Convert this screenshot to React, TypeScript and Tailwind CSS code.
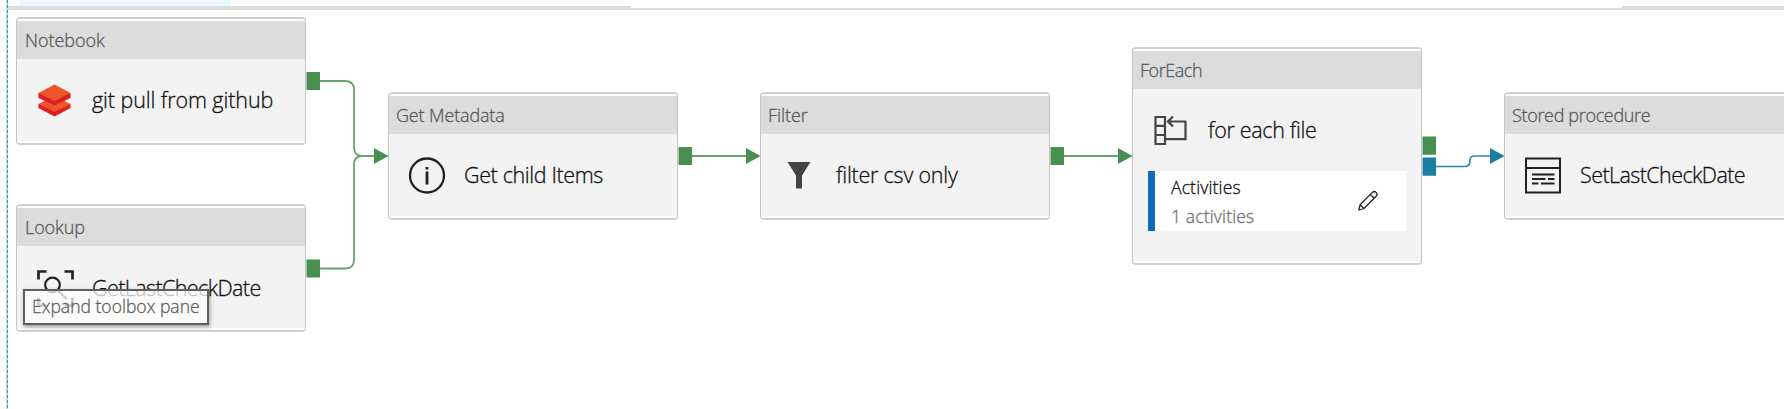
import React from "react";

type NodeProps = {
  type: string;
  typeClass: string;
  title: string;
  titleClass: string;
  className: string;
  icon: React.ReactNode;
  children?: React.ReactNode;
};

function ActivityNode({ type, typeClass, title, titleClass, className, icon, children }: NodeProps) {
  return (
    <div className={`absolute flex w-[290px] flex-col rounded-[4px] border-x border-y-2 border-x-[#c4c4c4] border-y-[#d0d0d0] bg-white py-[2px] ${className}`}>
      <div className="flex h-[38px] shrink-0 items-center bg-[#dcdcdc] pl-2 text-[18px] leading-none text-[#595959]">
        <span className={`whitespace-nowrap ${typeClass}`}>{type}</span>
      </div>
      <div className="flex flex-1 flex-col bg-[#f3f3f3]">
        <div className="flex h-[82px] shrink-0 items-center">
          <div className="flex w-[75px] shrink-0 pl-5">{icon}</div>
          <span className={`whitespace-nowrap text-[21.5px] leading-none text-[#111] ${titleClass}`}>{title}</span>
        </div>
        {children}
      </div>
    </div>
  );
}

const NotebookIcon = () => (
  <svg width="36" height="36" viewBox="0 0 36 36">
    <g transform="translate(-0.500 2)">
      <path d="M2 19.500v4.500l16 8.500 16-8.500v-4.500l-16 7z" fill="#dc1f26" />
      <path d="M2 20l16-8 16 8-16 8z" fill="#ef552b" />
      <path d="M2 9v5l16 7.500 16-7.500V9z" fill="#dc1f26" />
      <path d="M2 9L18 0.500 34 9l-16 8z" fill="#ef552b" />
    </g>
  </svg>
);

const LookupIcon = () => (
  <svg width="37" height="37" viewBox="0 0 37 37" fill="none" stroke="#222">
    <path d="M1.500 9.500V1.500h8M27.500 1.500h8v8M1.500 27.500v8h8M27.500 35.500h8v-8" strokeWidth="2.700" />
    <circle cx="15.500" cy="15" r="7.300" strokeWidth="2.200" />
    <path d="M20.700 20.500l9 8.500" strokeWidth="2.200" />
  </svg>
);

const InfoIcon = () => (
  <svg width="37" height="37" viewBox="0 0 37 37" fill="none" stroke="#222">
    <circle cx="18" cy="18.500" r="17" strokeWidth="2.300" />
    <path d="M18 14.500v13M18 10v2.500" strokeWidth="2.800" />
  </svg>
);

const FilterIcon = () => (
  <svg width="36" height="36" viewBox="0 0 36 36">
    <path d="M6.500 5H29.500L21 18.500V31.500H15V18.500z" fill="#444" />
  </svg>
);

const ForEachIcon = () => (
  <svg width="36" height="36" viewBox="0 0 36 36" fill="none" stroke="#444" strokeWidth="2.200">
    <path d="M2.500 5h9.500v27H2.500zM2.500 13.800h9.500M2.500 23h9.500" />
    <path d="M15 9.500H32.500v17.700H12.500M20 4.500l-5 5 5 5" />
  </svg>
);

const ProcedureIcon = () => (
  <svg width="37" height="37" viewBox="0 0 37 37" fill="none" stroke="#222" strokeWidth="2">
    <path d="M1 1.500h34v34h-34zM1 11h34" />
    <path d="M7 17.500H29.500M7 22H20.500M23 22H29.500M7 26.500H13.500M16 26.500H29.500" />
  </svg>
);

const PencilIcon = () => (
  <svg width="22" height="22" viewBox="0 0 22 22" fill="none" stroke="#222" strokeWidth="1.300" strokeLinejoin="round">
    <path d="M1.800 20l1.300-5.200L15.300 2.400a2.500 2.500 0 0 1 3.800 3.800L7 18.500zM3.100 14.800L7 18.500M13.300 4.400l3.900 3.900" />
  </svg>
);

function Connectors() {
  return (
    <svg className="absolute inset-0" width="1784" height="409" fill="none">
      <g stroke="#67a56d" strokeWidth="1.800">
        <path d="M320 81H345Q354 81 354 90V147Q354 156 362 156H376" />
        <path d="M320 268.500H345Q354 268.500 354 260V165Q354 156 362 156" />
        <path d="M692 156H748M1064 156H1120" />
      </g>
      <path d="M1436 166.500H1464Q1470 166.500 1470 161V160Q1470 156 1475 156H1492" stroke="#2b88a8" strokeWidth="1.600" />
      <g fill="#488f50">
        <path d="M374 148L388.500 156L374 164zM746 148L760.500 156L746 164zM1118 148L1132.500 156L1118 164z" />
        <path d="M306.500 72H320V90H306.500zM306.500 259.500H320V277.500H306.500zM678.500 147H692V165H678.500zM1050.500 147H1064V165H1050.500zM1422.500 136.500H1436V154.800H1422.500z" />
      </g>
      <path d="M1422.500 157.500H1436V175.800H1422.500zM1490 148L1504.500 156L1490 164z" fill="#1b7da0" />
    </svg>
  );
}

export default function App() {
  return (
    <main className="relative h-[409px] w-[1784px] overflow-hidden bg-white font-['Open_Sans','Noto_Sans',sans-serif] font-light [-webkit-text-stroke:0.3px_currentColor]">
      <div className="ml-5 h-1.5 w-[211px] bg-[#ebf7ff]" />
      <div className="ml-2 flex h-1 items-end">
        <div className="h-1 w-[623px] bg-[#dcdcdc]" />
        <div className="h-0.5 flex-1 bg-[#dcdcdc]" />
        <div className="h-1 w-[162px] bg-[#dcdcdc]" />
      </div>
      <svg className="absolute top-0 left-[6px]" width="2" height="409">
        <path d="M1 0V409" stroke="#d0d4d6" strokeWidth="2" />
        <path d="M1.500 0V409" stroke="#00a8e0" strokeWidth="1" strokeDasharray="3 2" />
      </svg>

      <ActivityNode className="top-[17px] left-[16px] h-[128px]" type="Notebook" typeClass="tracking-[-0.05px]" title="git pull from github" titleClass="tracking-[-0.09px]" icon={<NotebookIcon />} />
      <ActivityNode className="top-[204px] left-[16px] h-[128px]" type="Lookup" typeClass="tracking-[-0.1px]" title="GetLastCheckDate" titleClass="relative top-px tracking-[-0.6px]" icon={<div className="pt-0.5"><LookupIcon /></div>} />
      <ActivityNode className="top-[92px] left-[388px] h-[128px]" type="Get Metadata" typeClass="-ml-px tracking-[-0.15px]" title="Get child Items" titleClass="tracking-[-0.37px]" icon={<InfoIcon />} />
      <ActivityNode className="top-[92px] left-[760px] h-[128px]" type="Filter" typeClass="-ml-px tracking-[-0.05px]" title="filter csv only" titleClass="tracking-[-0.22px]" icon={<FilterIcon />} />
      <ActivityNode className="top-[47px] left-[1132px] h-[218px]" type="ForEach" typeClass="-ml-px tracking-[-0.45px]" title="for each file" titleClass="tracking-[-0.32px]" icon={<ForEachIcon />}>
        <div className="mr-[15px] ml-[15px] flex h-[60px] items-center border-l-[7px] border-[#0f6cbd] bg-white pr-[27px] pl-4">
          <div className="flex flex-1 flex-col pt-px text-[17.5px] leading-[29px] tracking-[0.15px]">
            <span className="text-[#111]">Activities</span>
            <span className="text-[#707070]">1 activities</span>
          </div>
          <PencilIcon />
        </div>
      </ActivityNode>
      <ActivityNode className="top-[92px] left-[1504px] h-[128px]" type="Stored procedure" typeClass="-ml-px tracking-[-0.33px]" title="SetLastCheckDate" titleClass="tracking-[-0.58px]" icon={<ProcedureIcon />} />

      <Connectors />

      <div className="absolute top-[289px] left-[23px] flex h-[36px] w-[186px] items-center border-2 border-[#5f5f5f] bg-white/75 pb-px pl-[7px] text-[17.5px] tracking-[0.02px] whitespace-nowrap text-[#606060] shadow-[1px_2px_4px_rgba(0,0,0,0.35)]">
        Expand toolbox pane
      </div>
    </main>
  );
}
